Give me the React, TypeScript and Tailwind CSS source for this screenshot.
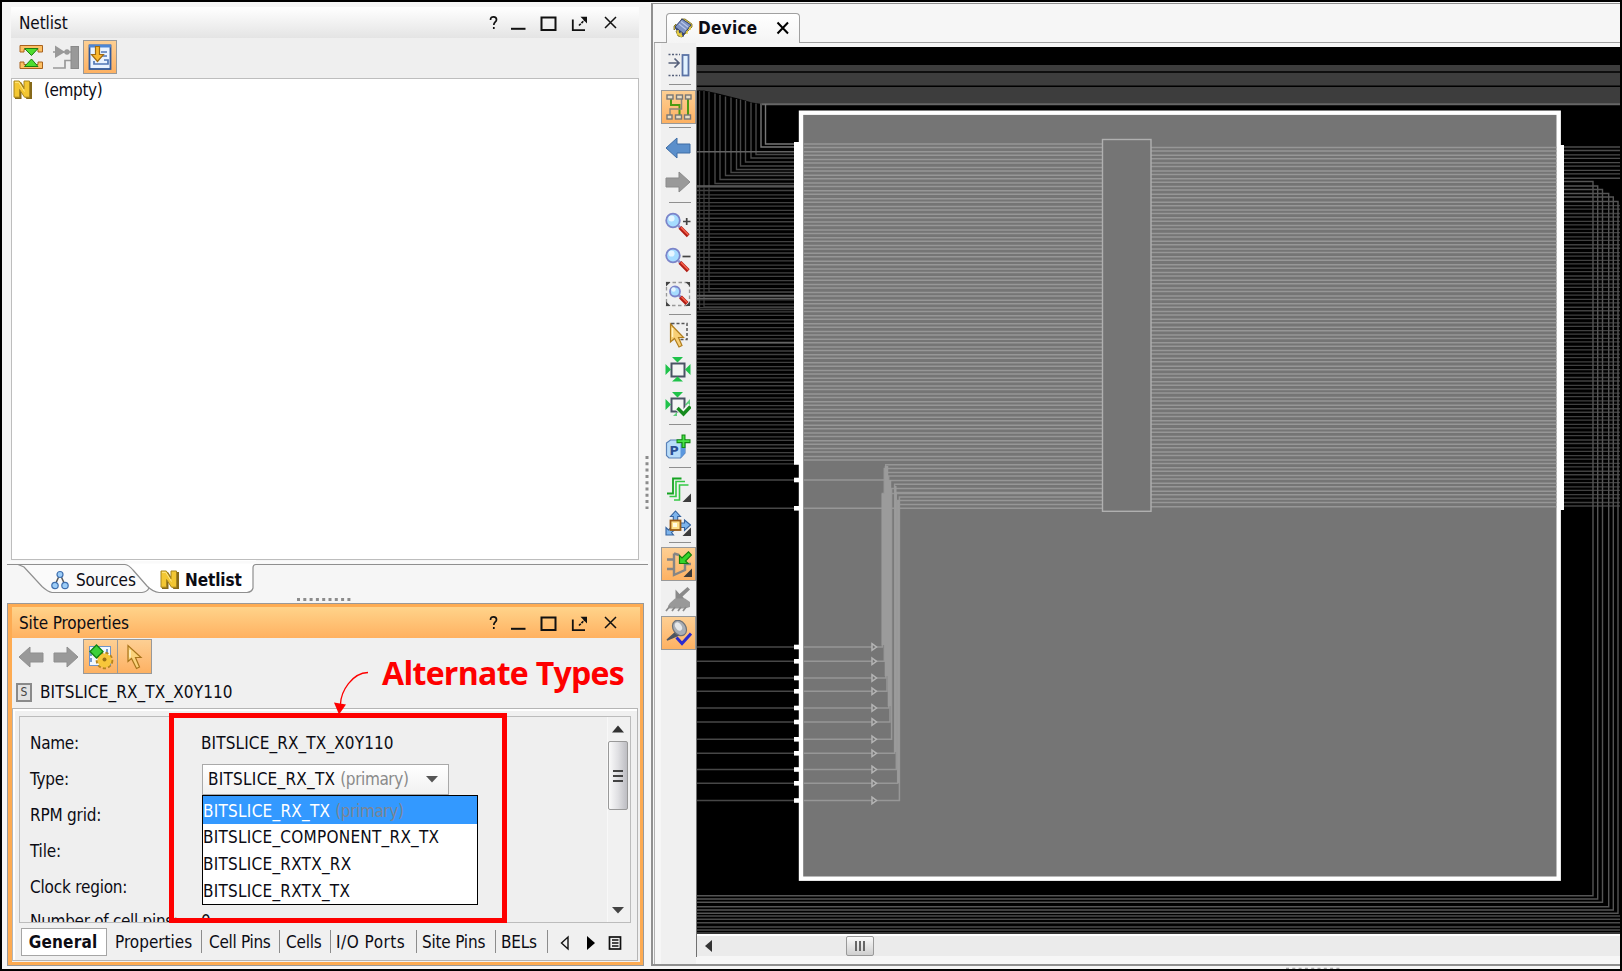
import type { ReactNode } from "react";

/* ---------- small glyphs ---------- */

function Ico({ children, size = 26 }: { children: ReactNode; size?: number }) {
  return (
    <svg width={size} height={size} viewBox="0 0 26 26" fill="none" className="block shrink-0">
      {children}
    </svg>
  );
}

function GoldN() {
  return (
    <svg width="20" height="20" viewBox="0 0 20 20" className="block shrink-0">
      <path d="M3 2H8L12.500 9V2H19V19H13.500L8.500 12V19H2V3Z" fill="#86691a" />
      <path d="M1 1H6.300L11 8.800V1H16.500V17.200H11.500L6.500 9.500V17.200H1Z" fill="#f3c733" stroke="#a8861d" strokeWidth="1" />
      <path d="M2 2.300H5.800L11.500 11.500" fill="none" stroke="#ffe98a" />
    </svg>
  );
}

function WindowButtons() {
  return (
    <svg width="132" height="20" viewBox="0 0 132 20" fill="none" stroke="#111" className="block">
      <path d="M2.500 7C2.500 4.500 4 3.800 5.500 3.800S8.500 4.700 8.500 6.700C8.500 9 5.800 9 5.800 12M5.800 14V16" strokeWidth="1.700" />
      <path d="M23 15.800H37.500" strokeWidth="2" />
      <rect x="53.500" y="4.500" width="14" height="12.500" strokeWidth="2" />
      <path d="M84.800 6.500V17.200H97" strokeWidth="1.800" />
      <path d="M91 12.500L97.500 6" strokeWidth="1.700" strokeDasharray="2.500 1" />
      <path d="M92.500 3.800H99V10.500Z" fill="#111" stroke="none" />
      <path d="M117 4L128 15M128 4L117 15" strokeWidth="1.500" />
    </svg>
  );
}

function ArrowLeft({ fill, stroke }: { fill: string; stroke: string }) {
  return (
    <Ico>
      <path d="M1 13L12 3V9H25V18H12V23Z" fill={fill} stroke={stroke} />
    </Ico>
  );
}

function ArrowRight({ fill, stroke }: { fill: string; stroke: string }) {
  return (
    <Ico>
      <path d="M25 13L14 3V9H1V18H14V23Z" fill={fill} stroke={stroke} />
    </Ico>
  );
}

function Lens({ cx = 8, cy = 8.500, r = 6.800 }: { cx?: number; cy?: number; r?: number }) {
  const e = cx + r * 0.800;
  const f = cy + r * 0.800;
  return (
    <>
      <path d={`M${e} ${f}l3 3`} stroke="#8c8cc8" strokeWidth="2.500" />
      <path d={`M${e + 1.500} ${f + 1.500}L${e + r + 3} ${f + r + 3}`} stroke="#b01c14" strokeWidth="4" />
      <path d={`M${e + 2.500} ${f + 1.500}L${e + r + 3} ${f + r + 2}`} stroke="#f4604a" strokeWidth="1.600" />
      <circle cx={cx} cy={cy} r={r} fill="#a6dcff" stroke="#7b84c9" strokeWidth="1.800" />
      <circle cx={cx - 1.500} cy={cy - 2} r={r * 0.450} fill="#e6f6ff" />
    </>
  );
}

function Corner() {
  return <path d="M26 17.500V26H17.500Z" fill="#3c3c3c" />;
}

function Fence({ check = false }: { check?: boolean }) {
  return (
    <Ico>
      <rect x="6.500" y="7.500" width="13" height="13" fill="#f4f4f4" stroke="#4a5364" strokeWidth="2" />
      <path d="M7 1H18L12.500 6.500Z M0.500 8V19L6 13.500Z" fill="#1fc24a" />
      {check ? (
        <>
          <path d="M25 8V17L20 13.500Z M8 25L12 21V25Z" fill="#1fc24a" opacity=".7" />
          <path d="M12.500 16.500L18.500 22.500L25.500 14.500" stroke="#f4f4f4" strokeWidth="6" />
          <path d="M12.500 17L18.500 23L25.500 15.500" stroke="#168a1e" strokeWidth="3.400" />
        </>
      ) : (
        <path d="M25.500 8V19L20 13.500Z M7 25.500H18L12.500 20.500Z" fill="#1fc24a" />
      )}
    </Ico>
  );
}

/* ---------- toolbar pieces ---------- */

const active = "flex shrink-0 items-center justify-center border border-[#999] bg-linear-to-b from-[#fdcf93] to-[#fdb162]";

function Tool({ h, on = false, children }: { h: string; on?: boolean; children: ReactNode }) {
  return (
    <div className={`${h} flex w-full shrink-0 items-center justify-center ${on ? "border border-[#999] bg-linear-to-b from-[#fdcf93] to-[#fdb162]" : "pr-px"}`}>
      {children}
    </div>
  );
}

function Sep({ h }: { h: string }) {
  return (
    <div className={`${h} flex w-full shrink-0 items-center justify-center pl-[2px]`}>
      <div className="h-px w-[22px] bg-[#8f8f8f]" />
    </div>
  );
}

function DeviceToolbar() {
  return (
    <div className="flex w-[35px] shrink-0 flex-col bg-[#f0f0f0] pt-[5px]">
      <Tool h="h-[33px]">
        <Ico>
          <path d="M3.500 2.500H15M3.500 23.500H15" stroke="#56607a" strokeWidth="1.500" strokeDasharray="2 1.500" />
          <path d="M3.500 11H13M9.500 6.500L14 11L9.500 15.500" stroke="#56607a" strokeWidth="1.700" />
          <rect x="17.500" y="3" width="6" height="20.500" fill="#e2f2ff" stroke="#5a72a5" strokeWidth="1.800" />
        </Ico>
      </Tool>
      <div className="flex h-[9px] w-full shrink-0 items-start justify-center pl-[2px] pt-[3px]">
        <div className="h-px w-[22px] bg-[#8f8f8f]" />
      </div>
      <Tool h="h-[34px]" on>
        <Ico>
          <path d="M5 5V11H13.500V21" stroke="#4b9b13" strokeWidth="2" />
          <path d="M15.500 5V15H4V21" stroke="#8d8679" strokeWidth="1.500" />
          <path d="M22 5V21" stroke="#4b9b13" strokeWidth="2" />
          <g fill="#e9dcc4" stroke="#777" strokeWidth="1.400">
            <rect x="1" y="1" width="6" height="4" /><rect x="10.500" y="1" width="6" height="4" /><rect x="19.500" y="1" width="5.500" height="4" />
            <rect x="1" y="21" width="5" height="4" /><rect x="9.500" y="21" width="6" height="4" /><rect x="18.500" y="21" width="6" height="4" />
          </g>
        </Ico>
      </Tool>
      <Sep h="h-[6px]" />
      <Tool h="h-[35px]"><ArrowLeft fill="#5b8fcb" stroke="#3f6da5" /></Tool>
      <Tool h="h-[34px]"><ArrowRight fill="#999" stroke="#8b8b8b" /></Tool>
      <Sep h="h-[7px]" />
      <Tool h="h-[37px]"><Ico><Lens /><path d="M18 9.500H25.500M21.700 6V13" stroke="#444" strokeWidth="1.700" /></Ico></Tool>
      <Tool h="h-[33px]"><Ico><Lens /><path d="M17.500 9.500H25.500" stroke="#444" strokeWidth="1.700" /></Ico></Tool>
      <Tool h="h-[35px]">
        <Ico>
          <rect x="1.500" y="1.500" width="23" height="23" stroke="#999" strokeDasharray="3.500 2.500" strokeWidth="1.300" />
          <path d="M1 1H5.500L1 5.500Z M25 1V5.500L20.500 1Z M1 25V20.500L5.500 25Z M25 25H20.500L25 20.500Z" fill="#444" />
          <Lens cx={10} cy={10.500} r={5} />
        </Ico>
      </Tool>
      <Sep h="h-[6px]" />
      <Tool h="h-[35px]">
        <Ico>
          <rect x="6.500" y="1.500" width="15.500" height="16" stroke="#555" strokeWidth="1.500" strokeDasharray="3 2" />
          <path d="M5.500 2V20L9.500 16.500L14 25L17 23.500L13.500 15.500H18.500Z" fill="#f8cf76" stroke="#b07d1e" strokeWidth="1.200" />
          <path d="M7.500 6V15" stroke="#fff2c4" strokeWidth="1.500" />
        </Ico>
      </Tool>
      <Tool h="h-[34px]"><Fence /></Tool>
      <Tool h="h-[35px]"><Fence check /></Tool>
      <Sep h="h-[6px]" />
      <Tool h="h-[39px]">
        <Ico>
          <path d="M1.500 9L5.500 6H20V19L15.500 24H4L1.500 21.500Z" fill="#b8dcfa" stroke="#5a82b8" strokeWidth="1.200" />
          <path d="M15.500 10L20 6V19L15.500 24Z" fill="#5b97de" />
          <text x="4.500" y="21" fontSize="12.500" fontWeight="700" fill="#2c4f94" fontFamily="DejaVu Sans">P</text>
          <path d="M18.500 0.500V14M11.500 7.200H25.500" stroke="#138a13" strokeWidth="4" />
          <path d="M18.500 1.500V13M12.500 7.200H24.500" stroke="#47e247" strokeWidth="1.800" />
        </Ico>
      </Tool>
      <Sep h="h-[3px]" />
      <Tool h="h-[40px]">
        <Ico>
          <path d="M2 17.500H8V2.500H16.500" stroke="#15a322" strokeWidth="1.800" />
          <path d="M4.500 20.500H11V5.500H20" stroke="#35c845" strokeWidth="1.600" />
          <path d="M9 24H14.500V9H23.500" stroke="#35c845" strokeWidth="1.600" />
          <Corner />
        </Ico>
      </Tool>
      <Tool h="h-[28px]">
        <Ico>
          <path d="M10.500 1L15.500 6.500H12.700V12H8.300V6.500H5.500Z M25.500 15L19.500 10V13H14V17.500H19.500V20.500Z M1 25V17.500L3.500 20L7 16.500L10 19.500L6.500 22.500L8.500 25Z" fill="#7db4ec" stroke="#34629e" strokeWidth="1.100" />
          <rect x="5.500" y="10.500" width="10" height="9.500" fill="#fde08a" stroke="#9a5b14" strokeWidth="1.800" />
          <rect x="8" y="13" width="4" height="4" fill="#fffbe0" />
          <Corner />
        </Ico>
      </Tool>
      <Sep h="h-[10px]" />
      <Tool h="h-[34px]" on>
        <Ico>
          <path d="M1 8.500H8M1 18H8M8 2.500V24L19 19V13" stroke="#858585" strokeWidth="2.400" />
          <path d="M8 2.500L13 4M20 13H25" stroke="#858585" strokeWidth="2.400" />
          <path d="M13.500 12.500V4.500L16 7L22.500 0.800L25.500 4L19.500 10L22 12.500Z" fill="#35d52b" stroke="#16810e" strokeWidth="1.200" />
          <Corner />
        </Ico>
      </Tool>
      <Tool h="h-[35px]">
        <Ico>
          <path d="M10.500 3.500V14.500H21L17.500 10.500L25 3.500L22.500 1L14.500 8Z" fill="#8a8a8a" />
          <path d="M3 20L5 17L10 12.500H20L25 16V21L20 22.500H4Z" fill="#999" />
          <path d="M1 25L5 20M7 25L10 21M13 25L16 21M18 25L21 21" stroke="#8a8a8a" strokeWidth="1.700" />
        </Ico>
      </Tool>
      <Tool h="h-[34px]" on>
        <Ico>
          <path d="M1 20L10 12L13 15Z" fill="#4d5560" stroke="#4d5560" strokeWidth="1.500" />
          <ellipse cx="13.500" cy="8" rx="6.300" ry="8.300" transform="rotate(-35 13.500 8)" fill="#a9aeb5" stroke="#6d7279" strokeWidth="1.200" />
          <ellipse cx="12.500" cy="6.500" rx="3" ry="4.500" transform="rotate(-35 12.500 6.500)" fill="#e6e8ea" />
          <path d="M10.500 17.500L16 23.500L25 13.500" stroke="#2a2ad0" strokeWidth="3" />
        </Ico>
      </Tool>
    </div>
  );
}

/* ---------- device drawing ---------- */

const PITCH = 7.810;
const wireY = (start: number, i: number) => start + Math.floor(i / 2) * PITCH + (i % 2) * 3.500;
const range = (n: number) => Array.from({ length: n }, (_, i) => i);

const NEST: [number, number, number][] = [
  [765.500, 104, 144], [761, 103.500, 147], [756, 103.500, 154.500], [751, 102.500, 158], [745.500, 101, 162], [740.500, 99.500, 166],
  [736.500, 99, 169.500], [731, 97.500, 172.500], [725.500, 96.500, 175.500], [720, 95, 179.500], [715, 93.500, 183.500],
];
const LOW: [number, number, number][] = [
  [647, 882.300, 493.500], [661.300, 884.300, 468.500], [678, 885.700, 464.800], [691.300, 887, 472.500], [708, 888.700, 476], [722, 890, 480.500],
  [739.300, 891.600, 488.500], [753.300, 894.600, 484.300], [769.500, 896.300, 492.500], [783.300, 897.700, 500.500], [800.500, 899.400, 497],
];
const RIGHT_NEST: [number, number, number][] = [
  [1593, 181.500, 895.700], [1597.700, 186, 899], [1602.500, 189.500, 902.300], [1608.700, 193.500, 906.700], [1613.300, 197, 910], [1618, 201.500, 913.300],
];

function DeviceCanvas() {
  return (
    <svg width="923" height="887" viewBox="697 47 923 887" fill="none" className="block shrink-0 bg-black">
      <path d="M697 65H1620V104H762L752 102.500L740 99L728 96L716 93L704 90.500H697Z" fill="#3d3d3d" />
      <path d="M697 72H1620M697 86.200H1620" stroke="#000" strokeWidth="1.500" />
      <path d="M762 104.300H1620" stroke="#666" strokeWidth="2" />

      {/* wires left of the site */}
      {NEST.map(([x, a, b], i) => (
        <path key={x} d={`M${x} ${a}V${b}H795`} stroke={i < 2 ? "#777" : "#484848"} strokeWidth="1.400" />
      ))}
      <path d="M709 92V292H795M704 91V307H795M699.500 91V309.500H795" stroke="#3c3c3c" strokeWidth="1.300" />
      {range(72).map((i) => (
        <path key={i} d={`M697 ${wireY(187, i)}H795`} stroke="#404040" strokeWidth="1.300" />
      ))}
      {[151.700, 186, 295.500, 298.500, 342.500].map((y) => (
        <path key={y} d={`M697 ${y}H795`} stroke="#636363" strokeWidth="1.400" />
      ))}

      {/* wires right of the site */}
      {range(9).map((i) => (
        <path key={i} d={`M1562 ${wireY(147, i)}H1620`} stroke="#4c4c4c" strokeWidth="1.300" />
      ))}
      {range(78).map((i) => (
        <path key={i} d={`M1562 ${wireY(205.700, i)}H1620`} stroke="#404040" strokeWidth="1.300" />
      ))}
      {RIGHT_NEST.map(([x, a, b]) => (
        <path key={x} d={`M1562 ${a}H${x}V${b}H697`} stroke="#555" strokeWidth="1.400" />
      ))}
      {[916, 919.300, 922.700, 927, 930, 933].map((y) => (
        <path key={y} d={`M697 ${y}H1620`} stroke="#4a4a4a" strokeWidth="1.400" />
      ))}

      {/* site body */}
      <rect x="801" y="112.700" width="757.700" height="766" fill="#757575" stroke="#fff" strokeWidth="4.400" />
      {range(82).map((i) => (
        <path key={i} d={`M803.500 ${wireY(144, i)}H1102`} stroke="#979797" strokeWidth="1.500" />
      ))}
      {range(93).map((i) => (
        <path key={i} d={`M1149 ${wireY(147.500, i)}H1556.500`} stroke="#979797" strokeWidth="1.500" />
      ))}
      {LOW.map(([y, x, top]) => (
        <path key={y} d={`M803.500 ${y}H${x}V${top}H1102`} stroke="#979797" strokeWidth="1.500" />
      ))}
      <path d="M803.500 480H884M803.500 508.300H1102M897 504.500H1102" stroke="#979797" strokeWidth="1.500" />
      <path d="M883.500 494V645M886.500 466V676M889.500 480V706" stroke="#9b9b9b" strokeWidth="3.500" />
      <path d="M895.500 486V752M898.500 500V783" stroke="#9b9b9b" strokeWidth="2" />
      {LOW.map(([y]) => (
        <path key={y} d={`M872 ${y - 3.300}L876.500 ${y}L872 ${y + 3.300}Z`} fill="#757575" stroke="#b4b4b4" strokeWidth="1.500" />
      ))}
      <rect x="1102.500" y="139.500" width="48.500" height="371.800" fill="#757575" stroke="#b0b0b0" strokeWidth="1.400" />

      {/* pins */}
      <path d="M794 142H799V464.700H794Z M1560 145H1564V510H1560Z" fill="#fff" />
      {[480, 508.300, ...LOW.map(([y]) => y)].map((y) => (
        <g key={y}>
          <path d={`M697 ${y}H795`} stroke="#474747" strokeWidth="1.400" />
          <path d={`M794 ${y}H800`} stroke="#fff" strokeWidth="4.600" />
        </g>
      ))}
    </svg>
  );
}

/* ---------- panels ---------- */

function NetlistPanel() {
  return (
    <section className="ml-[9px] mt-[5px] flex w-[628px] shrink-0 flex-col">
      <header className="flex h-[31px] shrink-0 items-center justify-between bg-linear-to-b from-white to-[#e4e4e4] pl-2 pr-[19px]">
        <span className="tracking-[-0.1px]">Netlist</span>
        <WindowButtons />
      </header>
      <div className="flex h-[40px] shrink-0 items-center bg-[#efefef] pb-[3px] pl-[7px]">
        <Ico>
          <path d="M2 1.500H24.500V8H20V5.500H6V8H2Z M2 24.500H24.500V18H20V20.500H6V18H2Z" fill="#fdc063" stroke="#a8621e" strokeWidth="1" />
          <path d="M6.500 4.500H20L13.500 11.500Z M6.500 22.500H20L13.500 15Z" fill="#4fdd2f" stroke="#1e7d12" strokeWidth="1" />
        </Ico>
        <div className="ml-[9px]">
          <Ico>
            <path d="M2 1.500L12 8L2 14Z" fill="#999" />
            <path d="M0 8H18M0 24H12V16.500H18" stroke="#999" strokeWidth="1.700" />
            <circle cx="14" cy="8" r="2.700" fill="#999" />
            <rect x="18" y="2.500" width="7.500" height="22" fill="#999" stroke="#8a8a8a" />
          </Ico>
        </div>
        <div className={`ml-[4px] h-[34px] w-[34px] ${active}`}>
          <Ico>
            <rect x="2.500" y="1.500" width="21" height="23.500" fill="#e9f3ff" stroke="#31599b" strokeWidth="1.800" />
            <path d="M2 2H24" stroke="#4d86d4" strokeWidth="3" />
            <path d="M14 8H20M14 12H20M17 16H21V20H7V17" stroke="#5077b5" strokeWidth="1.700" />
            <path d="M8.500 2.500H12.500V10.500H16.500L10.500 17.500L4.500 10.500H8.500Z" fill="#fbb92f" stroke="#a06b12" strokeWidth="1.200" />
          </Ico>
        </div>
      </div>
      <div className="flex h-[482px] shrink-0 items-start border-[1.500px] border-[#bdbdbd] bg-white pl-px pt-px">
        <div className="flex h-[20px] items-center gap-[11px]">
          <GoldN />
          <span className="tracking-[-0.4px]">(empty)</span>
        </div>
      </div>
    </section>
  );
}

function SourceTabs() {
  return (
    <nav className="relative ml-[5px] flex h-[43px] w-[641px] shrink-0 items-start">
      <svg width="641" height="43" viewBox="7 560 641 43" fill="none" className="absolute left-0 top-0">
        <path d="M18 564.500C28 565 38 583 44 588.500Q48 592 52 592.500H142Q147 592 149 588L131 568Q128 565 125 564.500Z" fill="#fafafa" />
        <path d="M7 564.500H125M18 564.500L24 567L42 586.500Q48 592 52 592.500H142Q147 592 149 588" stroke="#8f8f8f" strokeWidth="1.200" />
        <path d="M125 564.500Q129 565 133 570L147 586Q153 592 159 592.500H247Q252 592 253 588V568Q253 564.500 256 564.500V560H125Z" fill="#fff" />
        <path d="M125 564.500Q129 565 133 570L147 586Q153 592 159 592.500H247Q252 592 253 588V568Q253 564.500 256 564.500H648" stroke="#8f8f8f" strokeWidth="1.200" />
        <path d="M7 561H648V563.600H7Z" fill="#fafafa" />
        <path d="M297 599.500H351" stroke="#8c8c8c" strokeWidth="3" strokeDasharray="3 3.300" />
      </svg>
      <div className="relative flex h-[39px] items-center pl-[44px]">
        <svg width="18" height="20" viewBox="0 0 18 20" className="block">
          <path d="M9 4L4 15M9 4L14 15" stroke="#555" strokeWidth="1.500" />
          <g fill="#9ccdf8" stroke="#3f6fae" strokeWidth="1.200">
            <circle cx="9" cy="4.500" r="3" /><circle cx="4" cy="15.500" r="3.200" /><circle cx="14" cy="15.500" r="3.200" />
          </g>
        </svg>
        <span className="ml-[7px] w-[84px] tracking-[-0.1px]">Sources</span>
        <GoldN />
        <span className="ml-[5px] font-bold tracking-[-0.1px]">Netlist</span>
      </div>
    </nav>
  );
}

const PROPS: [string, string][] = [
  ["Type:", "h-[36px]"],
  ["RPM grid:", "h-[36px]"],
  ["Tile:", "h-[35px]"],
  ["Clock region:", "h-[38px]"],
];

function SitePanel() {
  return (
    <section className="ml-[5px] flex h-[363px] w-[637px] shrink-0 flex-col border border-[#999] bg-[#fdab52] p-[3px] pl-[4px]">
      <header className="flex h-[31px] shrink-0 items-center justify-between bg-linear-to-b from-[#ffd38a] to-[#ffb160] pl-[7px] pr-[20px]">
        <span className="tracking-[-0.1px]">Site Properties</span>
        <WindowButtons />
      </header>
      <div className="relative flex flex-1 flex-col bg-[#f0f0f0]">
        <div className="flex h-[38px] shrink-0 items-center pb-px pl-[6px]">
          <ArrowLeft fill="#999" stroke="#8f8f8f" />
          <div className="ml-[9px]"><ArrowRight fill="#999" stroke="#8f8f8f" /></div>
          <div className={`ml-[4px] h-[35px] w-[35px] ${active}`}>
            <Ico>
              <rect x="1.500" y="2.500" width="21" height="19" fill="#f3f8ff" stroke="#6f94c9" />
              <path d="M3 18V14M3 12V8M19 5V12" stroke="#4c79bb" strokeWidth="1.500" />
              <circle cx="16.500" cy="16.500" r="7.300" stroke="#b5841f" strokeWidth="3" strokeDasharray="3 2" />
              <circle cx="16.500" cy="16.500" r="7" fill="#f7c63a" />
              <circle cx="16.500" cy="15.500" r="2" fill="#9a7015" />
              <path d="M8.500 1L15 7.500L8.500 14L2 7.500Z" fill="#3ed03a" stroke="#12810f" strokeWidth="1.300" />
            </Ico>
          </div>
          <div className={`-ml-px h-[35px] w-[35px] ${active}`}>
            <Ico>
              <path d="M6 1.500V17.500L9.500 14.500L14.500 24.500L17.500 23L13.500 13.500H19Z" fill="#fbd27a" stroke="#a8741a" strokeWidth="1.200" />
              <path d="M8 6V13.500" stroke="#fff2c4" strokeWidth="1.500" />
            </Ico>
          </div>
        </div>
        <div className="flex h-[32px] shrink-0 items-center pl-[4px]">
          <div className="flex h-[19px] w-[16px] items-center justify-center border-2 border-[#8a8a8a] bg-[#e2e2e2] text-[12px] text-[#444]">S</div>
          <span className="ml-2 tracking-[0.13px]">BITSLICE_RX_TX_X0Y110</span>
        </div>
        <div className="flex h-[253px] w-[626px] shrink-0 flex-col border border-[#b5b5b5] bg-[#f0f0f0] pl-[6px] pt-[7px] shadow-[inset_2px_2px_0_#fff]">
          <div className="flex h-[207px] w-[612px] shrink-0 justify-between overflow-hidden border-[1.500px] border-[#bcbcbc] bg-[#efefef] pl-[10px]">
            <div className="flex flex-col pt-[8px]">
              <div className="flex h-[36px] shrink-0 items-center">
                <span className="w-[171px] tracking-[-0.3px]">Name:</span>
                <span className="tracking-[0.13px]">BITSLICE_RX_TX_X0Y110</span>
              </div>
              {PROPS.map(([label, h]) => (
                <div key={label} className={`${h} flex shrink-0 items-center`}>
                  <span className="w-[171px] tracking-[-0.2px]">{label}</span>
                  {label === "Type:" && (
                    <div className="ml-px flex h-[31px] w-[247px] items-center border-[1.500px] border-[#a9a9a9] bg-linear-to-b from-white to-[#f1f1f1] pl-[5px]">
                      <span className="tracking-[0.26px]">BITSLICE_RX_TX</span>
                      <span className="ml-[5px] w-[86px] tracking-[-0.4px] text-[#8a8a8a]">(primary)</span>
                      <svg width="12" height="7" className="block"><path d="M0 0H12L6 6.500Z" fill="#555" /></svg>
                    </div>
                  )}
                </div>
              ))}
              <div className="flex h-[30px] shrink-0 items-center">
                <span className="w-[171px] whitespace-nowrap tracking-[-0.3px]">Number of cell pins:</span>
                <span>0</span>
              </div>
            </div>
            <div className="flex w-[23px] shrink-0 flex-col items-center border-l border-[#f8f8f8] bg-[#f1f1f1] pr-[3px] pt-[8px]">
              <svg width="12" height="8" className="block shrink-0"><path d="M0 7.500L6 0.500L12 7.500Z" fill="#333" /></svg>
              <div className="mt-[8px] flex h-[69px] w-[20px] shrink-0 flex-col items-center justify-center gap-[3px] rounded-[2px] border-[1.500px] border-[#999] bg-linear-to-r from-[#fafafa] via-[#e0e0e3] to-[#bdbdc2]">
                <div className="h-[2px] w-[10px] bg-[#444]" />
                <div className="h-[2px] w-[10px] bg-[#444]" />
                <div className="h-[2px] w-[10px] bg-[#444]" />
              </div>
              <svg width="12" height="7" className="mt-[97px] block shrink-0"><path d="M0 0H12L6 6.500Z" fill="#444" /></svg>
            </div>
          </div>
          <div className="flex h-[37px] shrink-0 items-center">
            <span className="ml-[2px] flex h-[28px] w-[86px] shrink-0 items-center justify-center border-[1.500px] border-[#a5a5a5] bg-white pr-[2px] font-bold tracking-[0.2px]">General</span>
            <span className="flex h-[23px] w-[95px] shrink-0 items-center border-r border-[#8c8c8c] pl-[8px]">Properties</span>
            <span className="flex h-[23px] w-[78px] shrink-0 items-center whitespace-nowrap border-r border-[#8c8c8c] pl-[7px] tracking-[-0.3px]">Cell Pins</span>
            <span className="flex h-[23px] w-[51px] shrink-0 items-center border-r border-[#8c8c8c] pl-[6px] tracking-[-0.2px]">Cells</span>
            <span className="flex h-[23px] w-[86px] shrink-0 items-center whitespace-nowrap border-r border-[#8c8c8c] pl-[5px] tracking-[0.5px]">I/O Ports</span>
            <span className="flex h-[23px] w-[79px] shrink-0 items-center whitespace-nowrap border-r border-[#8c8c8c] pl-[5px] tracking-[-0.2px]">Site Pins</span>
            <span className="flex h-[23px] w-[52px] shrink-0 items-center border-r border-[#8c8c8c] pl-[5px] tracking-[-0.2px]">BELs</span>
            <svg width="64" height="18" viewBox="0 0 64 18" fill="none" className="ml-[12px] mt-[3px] block shrink-0">
              <path d="M8 3V15L1.500 9Z" stroke="#111" strokeWidth="1.400" />
              <path d="M27 2V16L35 9Z" fill="#000" />
              <rect x="49.500" y="3" width="11" height="12" stroke="#111" strokeWidth="1.700" />
              <path d="M52 6H58.500M52 9H58.500M52 12H58.500" stroke="#111" strokeWidth="1.300" />
            </svg>
          </div>
        </div>

        {/* open list of the type selector */}
        <div className="absolute left-[190px] top-[157px] flex h-[110px] w-[276px] flex-col border-[1.500px] border-black bg-white">
          <div className="flex h-[28px] shrink-0 items-center bg-[#3399ff] pt-px text-white">
            <span className="tracking-[0.26px]">BITSLICE_RX_TX</span>
            <span className="ml-[5px] tracking-[-0.4px] text-[#7c8594]">(primary)</span>
          </div>
          <div className="flex h-[26px] shrink-0 items-center tracking-[0.25px]">BITSLICE_COMPONENT_RX_TX</div>
          <div className="flex h-[27px] shrink-0 items-center tracking-[0.25px]">BITSLICE_RXTX_RX</div>
          <div className="flex h-[27px] shrink-0 items-center tracking-[0.25px]">BITSLICE_RXTX_TX</div>
        </div>

        {/* callout */}
        <div className="absolute left-[157px] top-[75px] h-[210px] w-[338px] border-[5px] border-[#fe0000]" />
        <svg width="40" height="46" viewBox="330 670 40 46" fill="none" className="absolute left-[318px] top-[31px]">
          <path d="M368 673.500C352 674 341 692 340.500 705" stroke="#fe0000" strokeWidth="1.300" />
          <path d="M334 703.500L346 705.500L339 715.500Z" fill="#fe0000" />
        </svg>
        <div className="absolute left-[370px] top-[13px] whitespace-nowrap font-['Open_Sans',sans-serif] text-[32px] font-bold leading-[44px] tracking-[-0.7px] text-[#fe0000]">
          Alternate Types
        </div>
      </div>
    </section>
  );
}

function DevicePanel() {
  return (
    <section className="mt-px flex h-[963px] min-w-0 flex-1 shrink-0 flex-col border-b-2 border-l-2 border-t-[1.500px] border-[#8f8f8f] pl-px">
      <div className="flex h-[39px] shrink-0 items-end">
        <div className="h-px w-[12px] self-end bg-[#a0a0a0]" />
        <div className="flex h-[30px] w-[134px] items-center rounded-t-[4px] border-[1.500px] border-b-0 border-[#a0a0a0] bg-linear-to-b from-white to-[#f4f4f4] pb-[2px] pl-[6px]">
          <svg width="20" height="20" viewBox="0 0 20 20" className="block">
            <path d="M1 8L3 6V10L1 12ZM3 13L5 18L9 19L17 11L19 9V6L12 1L8 1" fill="#e9cf43" stroke="#6f6420" strokeWidth=".8" />
            <path d="M9 1L18 7L11 16L2 9Z" fill="#7e93c4" stroke="#2f3d6e" strokeWidth="1" />
            <path d="M2 9L11 16V19L3 12Z" fill="#35467c" />
            <path d="M6 6L13 11.500M8 3.500L15 9" stroke="#b6c6ea" strokeWidth="1.200" />
            <path d="M5 12V17M8 14.500V19M14 13V16M17 9V12" stroke="#e9cf43" strokeWidth="1.500" />
          </svg>
          <span className="ml-[5px] w-[78px] font-bold tracking-[0.3px]">Device</span>
          <svg width="14" height="14" className="block"><path d="M1.500 1.500L12 12.500M12 1.500L1.500 12.500" stroke="#000" strokeWidth="2" /></svg>
        </div>
        <div className="h-px flex-1 self-end bg-[#a0a0a0]" />
      </div>
      <div className="flex min-h-0 flex-1 border-l-[1.500px] border-[#b0b0b0] bg-[#f6f6f6] pl-[6px]">
        <DeviceToolbar />
        <div className="mt-[4px] flex h-[910px] w-[924px] flex-col border-l border-[#707070]">
          <DeviceCanvas />
          <div className="flex h-[22px] items-center border-t-2 border-white bg-[#ebebeb] pl-[8px]">
            <svg width="8" height="12" className="block"><path d="M7 0V12L0 6Z" fill="#333" /></svg>
            <div className="ml-[133px] flex h-[20px] w-[28px] items-center justify-center gap-[2px] rounded-[2px] border-[1.500px] border-[#999] bg-linear-to-b from-[#fafafa] to-[#cfcfcf]">
              <div className="h-[10px] w-[2px] bg-[#666]" />
              <div className="h-[10px] w-[2px] bg-[#666]" />
              <div className="h-[10px] w-[2px] bg-[#666]" />
            </div>
          </div>
        </div>
      </div>
    </section>
  );
}

export default function App() {
  return (
    <div className="h-[971px] w-[1622px] overflow-hidden bg-black p-[2px] font-['DejaVu_Sans_Condensed','DejaVu_Sans',sans-serif] text-[17px] leading-[20px] text-[#0c0c14]">
      <div className="flex h-[967px] w-[1618px] overflow-hidden bg-[#f6f6f6]">
        <div className="flex w-[642px] shrink-0 flex-col">
          <NetlistPanel />
          <SourceTabs />
          <SitePanel />
        </div>
        <div className="flex w-[7px] shrink-0 flex-col pt-[453px]">
          <svg width="4" height="54" className="ml-px block"><path d="M2 1V54" stroke="#8c8c8c" strokeWidth="3" strokeDasharray="3 3.300" /></svg>
        </div>
        <div className="flex min-w-0 flex-1 flex-col">
          <DevicePanel />
          <svg width="56" height="2" className="ml-[635px] mt-px block shrink-0"><path d="M0 1.500H56" stroke="#a5a5a5" strokeWidth="1.500" strokeDasharray="3 3.300" /></svg>
        </div>
      </div>
    </div>
  );
}
